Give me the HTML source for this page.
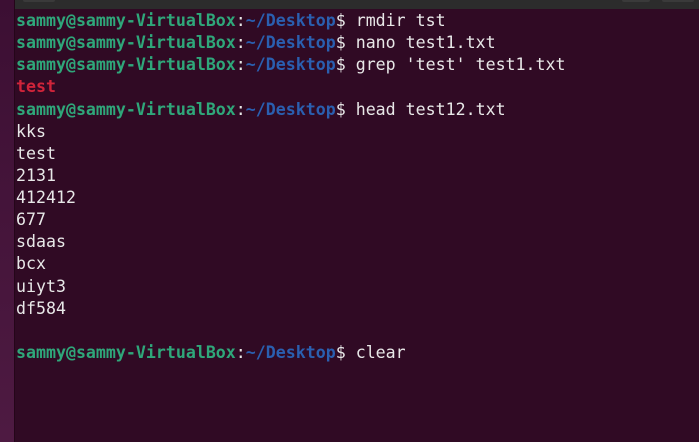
<!DOCTYPE html>
<html><head><style>
html,body{margin:0;padding:0;width:699px;height:442px;overflow:hidden;background:#300a24;}
.strip{position:absolute;left:0;top:0;width:14px;height:442px;background:linear-gradient(#3c0f33,#4e1a42);border-right:1px solid #240619;}
.hdr{position:absolute;left:15px;top:0;right:0;height:9px;background:#2c2c2c;}
.b1{position:absolute;left:23px;top:0;width:32px;height:2px;background:#3a3a3a;border-radius:0 0 4px 4px;}
.b2{position:absolute;left:622px;top:0;width:28px;height:2px;background:#3a3a3a;border-radius:0 0 4px 4px;}
.b3{position:absolute;left:662px;top:0;width:32px;height:2px;background:#3a3a3a;border-radius:0 0 4px 4px;}
pre{position:absolute;left:16px;top:10px;margin:0;font-family:"DejaVu Sans Mono","Liberation Mono",monospace;font-size:16.6px;line-height:22.13px;color:#e8e8e8;}
.g{font-weight:bold;color:#2fa77a}
.bl{color:#2a5fb0;font-weight:bold}
.r{color:#d0243a;font-weight:bold}
</style></head><body>
<div class="strip"></div><div class="hdr"></div><div class="b1"></div><div class="b2"></div><div class="b3"></div>
<pre><span class="g">sammy@sammy-VirtualBox</span>:<span class="bl">~/Desktop</span>$ rmdir tst
<span class="g">sammy@sammy-VirtualBox</span>:<span class="bl">~/Desktop</span>$ nano test1.txt
<span class="g">sammy@sammy-VirtualBox</span>:<span class="bl">~/Desktop</span>$ grep 'test' test1.txt
<span class="r">test</span>
<span class="g">sammy@sammy-VirtualBox</span>:<span class="bl">~/Desktop</span>$ head test12.txt
kks
test
2131
412412
677
sdaas
bcx
uiyt3
df584

<span class="g">sammy@sammy-VirtualBox</span>:<span class="bl">~/Desktop</span>$ clear</pre>
</body></html>
